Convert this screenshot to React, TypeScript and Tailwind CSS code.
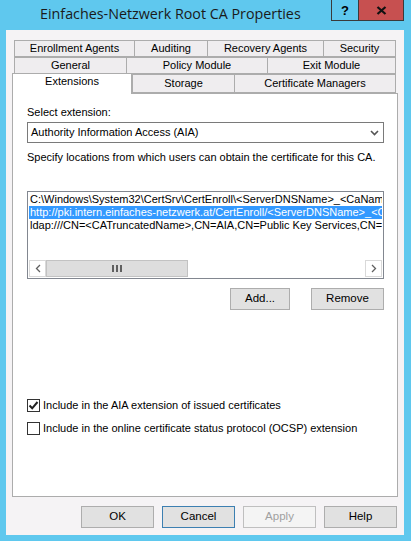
import React from 'react';

const ui = { fontFamily: '"Liberation Sans", Arial, sans-serif' };

function Tab({ label, w, active }: { label: string; w: number; active?: boolean }) {
  return (
    <div
      style={{ width: w }}
      className={
        active
          ? 'relative z-10 -mt-px -mb-px h-[21px] border border-b-0 border-[#acacac] bg-white flex items-start justify-center pt-[2px]'
          : 'h-full border border-r-0 border-[#acacac] bg-[#efedef] flex items-center justify-center last:border-r'
      }
    >
      <span className="leading-none text-[11px] text-black">{label}</span>
    </div>
  );
}

function Button({ label, w, focus, disabled }: { label: string; w: number; focus?: boolean; disabled?: boolean }) {
  return (
    <div
      style={{ width: w }}
      className={
        'h-[22px] flex items-center justify-center text-[11.5px] ' +
        (disabled
          ? 'border border-[#bfbfbf] bg-[#f4f4f4] text-[#a0a0a0]'
          : focus
          ? 'border border-[#3c7fb1] bg-[#e1e1e1] text-black'
          : 'border border-[#adadad] bg-[#e1e1e1] text-black')
      }
    >
      {label}
    </div>
  );
}

function Check({ checked }: { checked?: boolean }) {
  return (
    <div className="w-[13px] h-[13px] border border-[#333] bg-white flex items-center justify-center shrink-0">
      {checked && (
        <svg width="11" height="11" viewBox="0 0 11 11">
          <path d="M1.5 5.5 L4.2 8.3 L9.5 2" fill="none" stroke="#222" strokeWidth="2" />
        </svg>
      )}
    </div>
  );
}

export default function App() {
  return (
    <div className="w-[411px] h-[541px] bg-[#5fc8ee] flex flex-col overflow-hidden" style={ui}>
      {/* Title bar */}
      <div className="h-[30px] flex shrink-0">
        <div className="flex-1 flex items-center pl-[40px] pb-[1px]">
          <span className="text-[14.3px] text-[#1a1a1a] leading-none whitespace-nowrap" style={{ fontFamily: '"Open Sans", "Noto Sans", sans-serif' }}>
            Einfaches-Netzwerk Root CA Properties
          </span>
        </div>
        <div className="flex items-start pr-[7px]">
          <div className="w-[28px] h-[21px] border border-[#3a3a3a] border-t-0 flex items-center justify-center bg-[#5fc8ee]">
            <span className="text-[13px] font-bold text-black leading-none">?</span>
          </div>
          <div className="w-[45px] h-[21px] border border-l-0 border-t-0 border-[#3a3a3a] bg-[#c75050] flex items-center justify-center">
            <svg width="11" height="9" viewBox="0 0 11 9">
              <path d="M1.5 1 L9.5 8 M9.5 1 L1.5 8" stroke="#111" strokeWidth="2.2" />
            </svg>
          </div>
        </div>
      </div>

      {/* Client area */}
      <div className="ml-[6px] w-[398px] h-[505px] bg-[#f5f3f5] flex flex-col">
        {/* Tabs */}
        <div className="pt-[10px] flex flex-col">
          <div className="flex h-[17px] ml-[8px]">
            <Tab label="Enrollment Agents" w={120} />
            <Tab label="Auditing" w={73} />
            <Tab label="Recovery Agents" w={116} />
            <Tab label="Security" w={73} />
          </div>
          <div className="flex h-[17px] ml-[8px]">
            <Tab label="General" w={112} />
            <Tab label="Policy Module" w={141} />
            <Tab label="Exit Module" w={129} />
          </div>
          <div className="flex h-[19px] ml-[6px] items-end">
            <Tab label="Extensions" w={120} active />
            <Tab label="Storage" w={102} />
            <Tab label="Certificate Managers" w={162} />
          </div>
        </div>

        {/* Panel */}
        <div className="ml-[6px] w-[386px] h-[404px] border border-[#acacac] bg-white flex flex-col pl-[14px] pr-[13px] text-[11px] text-black">
          <div className="mt-[12px] h-[13px] leading-[13px]">Select extension:</div>
          <div className="mt-[3px] h-[21px] border border-[#7a7a7a] bg-white flex items-center pl-[3px] pr-[4px]">
            <span className="flex-1 leading-none">Authority Information Access (AIA)</span>
            <svg width="9" height="6" viewBox="0 0 9 6">
              <path d="M1 1 L4.5 4.5 L8 1" fill="none" stroke="#555" strokeWidth="1.6" />
            </svg>
          </div>
          <div className="mt-[8px] h-[13px] leading-[13px] whitespace-nowrap">Specify locations from which users can obtain the certificate for this CA.</div>

          {/* Listbox */}
          <div className="mt-[27px] h-[88px] border border-[#828790] bg-white flex flex-col p-px">
            <div className="flex-1 flex flex-col overflow-hidden whitespace-nowrap">
              <div className="h-[13px] leading-[13px] pl-[1px] overflow-hidden">
                C:\Windows\System32\CertSrv\CertEnroll\&lt;ServerDNSName&gt;_&lt;CaName&gt;&lt;CertificateName&gt;.crt
              </div>
              <div className="h-[13px] leading-[13px] pl-[1px] overflow-hidden bg-[#3399ff] text-white">
                http://pki.intern.einfaches-netzwerk.at/CertEnroll/&lt;ServerDNSName&gt;_&lt;CaName&gt;.crt
              </div>
              <div className="h-[13px] leading-[13px] pl-[1px] overflow-hidden">
                ldap:///CN=&lt;CATruncatedName&gt;,CN=AIA,CN=Public Key Services,CN=Services
              </div>
            </div>
            <div className="h-[17px] flex bg-[#f0f0f0]">
              <div className="w-[17px] h-full border border-[#d9d9d9] bg-white flex items-center justify-center">
                <svg width="6" height="9" viewBox="0 0 6 9">
                  <path d="M5 1 L1.5 4.5 L5 8" fill="none" stroke="#606060" strokeWidth="1.3" />
                </svg>
              </div>
              <div className="w-[142px] h-full border border-[#c2c2c2] bg-[#dddddd] flex items-center justify-center gap-[2px]">
                <div className="w-[2px] h-[7px] bg-[#606060]" />
                <div className="w-[2px] h-[7px] bg-[#606060]" />
                <div className="w-[2px] h-[7px] bg-[#606060]" />
              </div>
              <div className="flex-1 bg-white" />
              <div className="w-[17px] h-full border border-[#d9d9d9] bg-white flex items-center justify-center">
                <svg width="6" height="9" viewBox="0 0 6 9">
                  <path d="M1 1 L4.5 4.5 L1 8" fill="none" stroke="#606060" strokeWidth="1.3" />
                </svg>
              </div>
            </div>
          </div>

          <div className="mt-[9px] flex justify-end gap-[21px]">
            <Button label="Add..." w={60} />
            <Button label="Remove" w={73} />
          </div>

          <div className="mt-[89px] flex items-center gap-[3px] h-[13px]">
            <Check checked />
            <span className="leading-none">Include in the AIA extension of issued certificates</span>
          </div>
          <div className="mt-[10px] flex items-center gap-[3px] h-[13px]">
            <Check />
            <span className="leading-none whitespace-nowrap">Include in the online certificate status protocol (OCSP) extension</span>
          </div>
        </div>

        {/* Dialog buttons */}
        <div className="mt-[9px] flex pl-[75px] gap-[8px]">
          <Button label="OK" w={73} />
          <Button label="Cancel" w={73} focus />
          <Button label="Apply" w={73} disabled />
          <Button label="Help" w={73} />
        </div>
      </div>
    </div>
  );
}
